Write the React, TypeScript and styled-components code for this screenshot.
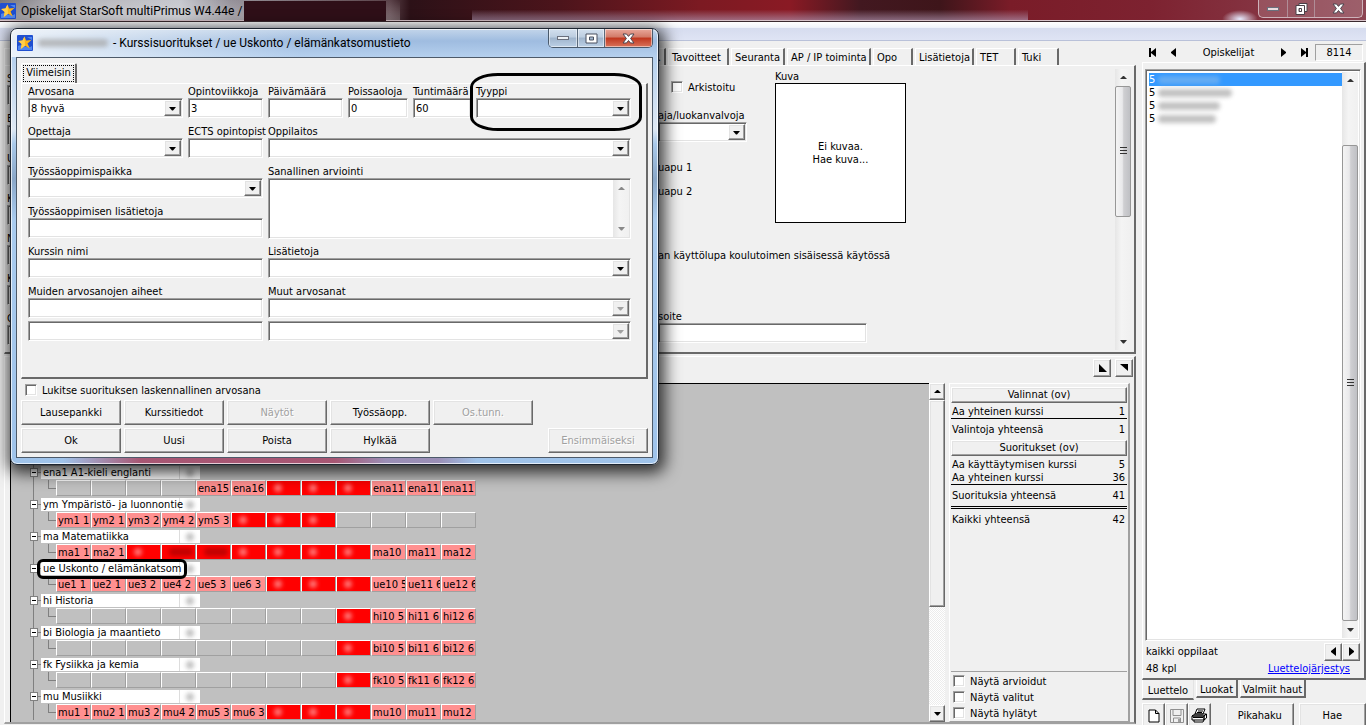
import React from 'react';
import styled, { createGlobalStyle, css } from 'styled-components';

const face = '#f0f0f0';

const GlobalStyle = createGlobalStyle`
  * { box-sizing: border-box; }
  body {
    margin: 0;
    background: ${face};
    color: #000;
    font: 11px/13px "DejaVu Sans Condensed", "Liberation Sans", sans-serif;
  }
  button, input, select, textarea { font: inherit; color: inherit; margin: 0; padding: 0; border-radius: 0; }
  p { margin: 0; }
`;

const raised = css`
  border: 1px solid;
  border-color: #fff #696969 #696969 #fff;
  box-shadow: inset -1px -1px #a0a0a0, inset 1px 1px #e3e3e3;
  background: ${face};
`;

const sunken = css`
  border: 1px solid;
  border-color: #a0a0a0 #fff #fff #a0a0a0;
  box-shadow: inset 1px 1px #696969, inset -1px -1px #e3e3e3;
  background: #fff;
`;

/* ---------- shared controls ---------- */

const Glyph = styled.svg`
  display: block;
  flex: none;
  fill: currentColor;
`;

type Dir = 'up' | 'down' | 'left' | 'right';
const arrowPaths: Record<Dir, string> = {
  up: 'M0 5h7L4 2H3z',
  down: 'M0 2h7L4 5.500H3z',
  left: 'M6 0v9L1 5V4z',
  right: 'M1 0v9L6 5V4z',
};
const Arrow = ({ dir }: { dir: Dir }) =>
  dir === 'left' || dir === 'right' ? (
    <Glyph width="7" height="9" viewBox="0 0 7 9"><path d={arrowPaths[dir]} /></Glyph>
  ) : (
    <Glyph width="7" height="7" viewBox="0 0 7 7"><path d={arrowPaths[dir]} /></Glyph>
  );

const TextInput = styled.input`
  ${sunken}
  display: block;
  width: 100%;
  height: 20px;
  padding: 0 2px;
`;

const ComboBox = styled.span`
  ${sunken}
  display: grid;
  height: 20px;
`;
const ComboSelect = styled.select`
  grid-area: 1 / 1;
  min-width: 0;
  appearance: none;
  border: 0;
  background: transparent;
  padding: 0 20px 0 2px;
  opacity: 1;
`;
const ComboArrow = styled.span<{ $off?: boolean }>`
  ${raised}
  grid-area: 1 / 1;
  justify-self: end;
  display: flex;
  align-items: center;
  justify-content: center;
  width: 17px;
  margin: 1px;
  pointer-events: none;
  color: ${(p) => (p.$off ? '#a0a0a0' : '#000')};
`;
const Combo = ({ id, value = '', off }: { id: string; value?: string; off?: boolean }) => (
  <ComboBox>
    <ComboSelect id={id} disabled={off} defaultValue={value} aria-label={id}>
      <option>{value}</option>
    </ComboSelect>
    <ComboArrow $off={off}><Arrow dir="down" /></ComboArrow>
  </ComboBox>
);

const CheckLabel = styled.label`
  display: flex;
  align-items: center;
  gap: 5px;
  height: 16px;
`;
const CheckBox = styled.input.attrs({ type: 'checkbox' })`
  ${sunken}
  appearance: none;
  flex: none;
  width: 12px;
  height: 12px;
`;
const Check = ({ children }: { children: React.ReactNode }) => (
  <CheckLabel><CheckBox />{children}</CheckLabel>
);

const PushButton = styled.button`
  ${raised}
  height: 25px;
  white-space: nowrap;
  &:disabled { color: #a0a0a0; text-shadow: 1px 1px #fff; }
`;

const SmallButton = styled(PushButton)`
  display: flex;
  align-items: center;
  justify-content: center;
  flex: none;
  width: 18px;
  height: 18px;
`;

const Smudge = styled.span<{ $w: number; $tone?: string }>`
  display: block;
  width: ${(p) => p.$w}px;
  height: 8px;
  border-radius: 4px;
  background: ${(p) => p.$tone ?? '#a8a8a8'};
  opacity: 0.7;
  filter: blur(2px);
`;

/* ---------- scroll bars ---------- */

const Scroll = styled.div<{ $dim?: boolean }>`
  display: flex;
  flex-direction: column;
  flex: none;
  width: 16px;
  background: linear-gradient(90deg, #e6e6e6, #f4f4f4 40%, #f0f0f0);
  color: ${(p) => (p.$dim ? '#888' : '#333')};
`;
const ScrollEnd = styled.button`
  display: flex;
  align-items: center;
  justify-content: center;
  height: 17px;
  border: 0;
  background: transparent;
`;
const ScrollSpace = styled.div<{ $grow: number }>`
  flex: ${(p) => p.$grow} 1 0;
`;
const ScrollThumb = styled.div<{ $grow: number }>`
  flex: ${(p) => p.$grow} 1 0;
  display: flex;
  align-items: center;
  justify-content: center;
  border: 1px solid #979797;
  border-radius: 2px;
  background: linear-gradient(90deg, #f4f4f4, #e9e9eb 45%, #cfcfd2 55%, #bfc0c4);
`;
const Grip = () => (
  <Glyph width="7" height="8" viewBox="0 0 7 8"><path d="M0 0h7v1H0zM0 3h7v1H0zM0 6h7v1H0z" /></Glyph>
);

const ClassicScroll = styled.div`
  display: flex;
  flex-direction: column;
  flex: none;
  width: 16px;
  background: repeating-conic-gradient(#fff 0 25%, #ececec 0 50%) 0 0 / 2px 2px;
`;
const ClassicEnd = styled(PushButton)`
  display: flex;
  align-items: center;
  justify-content: center;
  height: 17px;
`;
const ClassicThumb = styled.div<{ $grow: number }>`
  ${raised}
  flex: ${(p) => p.$grow} 1 0;
`;

/* ---------- application frame ---------- */

const Shell = styled.main`
  position: relative;
  display: flex;
  flex-direction: column;
  height: 100vh;
  overflow: hidden;
  background: ${face};
`;

const AppTitle = styled.header`
  display: flex;
  flex: none;
  height: 22px;
  border-bottom: 1px solid #3b2a30;
  box-shadow: inset 0 -1px #d8c4cb;
  background:
    linear-gradient(180deg, transparent 45%, rgba(176, 150, 178, 0.7)) 472px 0 / 556px 100% no-repeat,
    radial-gradient(ellipse at center, #e8ecff, transparent 70%) 1222px 10px / 36px 18px no-repeat,
    linear-gradient(180deg, transparent, rgba(255, 255, 255, 0.25)) 0 0 / 400px 100% no-repeat,
    linear-gradient(90deg, #77757a, #b2b0b5 60px, #c6c8ce 180px, #96929a 230px, #5a4148 390px, #2c1117 410px,
      #4c141b 560px, #7c1a22 700px, #8a1a24 790px, #421820 860px, #3e151a 940px, #7a1c28 1010px, #7d2230 1150px, #8c4452 1366px);
`;
const AppTitleText = styled.h1`
  display: flex;
  align-items: center;
  gap: 5px;
  flex: 1;
  margin: 0;
  font: 12px/20px Roboto, "Liberation Sans", sans-serif;
  white-space: nowrap;
`;
const Redacted = styled.span`
  align-self: stretch;
  width: 142px;
  margin: 1px 0 0 -3px;
  background: #2f0f18;
`;
const FrameButtons = styled.div`
  display: flex;
  height: 18px;
  margin-right: 3px;
  border: 1px solid #cdb2ba;
  border-top: 0;
  border-radius: 0 0 5px 5px;
`;
const FrameButton = styled.button<{ $w: number }>`
  display: flex;
  align-items: center;
  justify-content: center;
  width: ${(p) => p.$w}px;
  border: 0;
  border-right: 1px solid #b08d97;
  background: rgba(255, 255, 255, 0.15);
  &:last-child { border-right: 0; }
`;
const MenuStrip = styled.div`
  flex: none;
  height: 19px;
  border-bottom: 1px solid #b9c1d9;
  background: linear-gradient(180deg, #fff, #f1f4fb 30%, #d6dcef 36%, #dfe4f4);
`;

const Body = styled.div`
  display: flex;
  flex: 1;
  min-height: 0;
`;
const LeftPane = styled.section`
  display: flex;
  flex-direction: column;
  flex: 1;
  min-width: 0;
  padding: 7px 6px 1px 4px;
`;

/* ---------- student card ---------- */

const TabRow = styled.div`
  display: flex;
  gap: 2px;
`;
const CardTab = styled.button<{ $w: number; $end?: boolean }>`
  flex: none;
  width: ${(p) => p.$w}px;
  height: 17px;
  padding: 0 3px;
  border: 0;
  border-top: 1px solid #fff;
  border-left: 1px solid #fff;
  border-right: 2px solid #696969;
  background: transparent;
  text-align: ${(p) => (p.$end ? 'right' : 'left')};
  white-space: nowrap;
`;
const Card = styled.div`
  display: flex;
  flex: none;
  height: 289px;
  padding: 3px 3px 2px 0;
  border: 1px solid #fff;
  border-right: 2px solid #696969;
  border-bottom: 2px solid #696969;
`;
const SideFields = styled.div`
  display: flex;
  flex-direction: column;
  flex: none;
  gap: 7px;
  width: 653px;
  padding: 3px 0 0 2px;
`;
const SideField = styled.label`
  display: block;
`;
const CardMain = styled.div`
  flex: 1;
  min-width: 0;
  padding-top: 1px;
`;
const CardTop = styled.div`
  display: flex;
  gap: 28px;
  height: 153px;
`;
const CardColumn = styled.div`
  width: 89px;
  padding-top: 9px;
`;
const CardCheck = styled.div`
  padding-left: 13px;
`;
const CardLabel = styled.label`
  display: block;
  padding-top: 14px;
  white-space: nowrap;
`;
const CardLine = styled.p`
  padding-top: 11px;
  white-space: nowrap;
`;
const HelperLines = styled.div`
  padding-top: 8px;
`;
const CardNote = styled.p`
  padding: 26px 0 48px;
  white-space: nowrap;
`;
const Address = styled.label`
  display: block;
  width: 209px;
`;
const PhotoTitle = styled.p`
  line-height: 13px;
  height: 13px;
`;
const Photo = styled.button`
  display: block;
  width: 131px;
  height: 140px;
  border: 1px solid #000;
  background: #fff;
`;

/* ---------- course work area ---------- */

const Work = styled.div`
  display: flex;
  flex-direction: column;
  flex: 1;
  min-height: 0;
  margin-top: 2px;
  border: 1px solid #fff;
  border-right: 2px solid #696969;
  border-bottom: 2px solid #a0a0a0;
`;
const WorkTools = styled.div`
  display: flex;
  justify-content: flex-end;
  gap: 4px;
  flex: none;
  height: 26px;
  padding: 2px 1px;
`;
const WorkBody = styled.div`
  display: flex;
  flex: 1;
  min-height: 0;
  padding: 0 4px 0 5px;
`;
const Tree = styled.div`
  isolation: isolate;
  flex: 1;
  min-width: 0;
  overflow: hidden;
  padding: 80px 0 0 19px;
  border-top: 1px solid #000;
  border-left: 1px solid #000;
  background: #c0c0c0;
`;
const Subject = styled.div`
  height: 32px;
  padding-top: 2px;
  background: linear-gradient(#808080, #808080) 3px 0 / 1px 100% no-repeat;
`;
const SubjectHead = styled.div`
  display: flex;
  align-items: center;
  height: 13px;
  margin-bottom: 1px;
`;
const Toggle = styled.button`
  display: flex;
  align-items: center;
  justify-content: center;
  width: 8px;
  height: 9px;
  border: 1px solid #808080;
  background: #fff;
`;
const Stem = styled.span`
  width: 3px;
  height: 1px;
  background: #808080;
`;
const SubjectName = styled.span`
  position: relative;
  z-index: 1;
  width: 138px;
  height: 13px;
  padding-left: 2px;
  background: #fff;
  white-space: nowrap;
`;
const Grade = styled.span`
  display: flex;
  align-items: center;
  width: 21px;
  height: 13px;
  padding-left: 6px;
  border-left: 1px solid #ddd;
  background: #fff;
`;
const Cells = styled.div`
  display: flex;
  padding-left: 18px;
`;
const Elbow = styled.span`
  width: 8px;
  height: 9px;
  border-left: 1px solid #808080;
  border-bottom: 1px solid #808080;
`;
const Cell = styled.span<{ $kind: 'empty' | 'pink' | 'red' }>`
  display: flex;
  align-items: center;
  width: 35px;
  height: 16px;
  padding-left: ${(p) => (p.$kind === 'red' ? 7 : 1)}px;
  overflow: hidden;
  white-space: nowrap;
  border: 1px solid;
  border-color: #fff #a0a0a0 #a0a0a0 #fff;
  background: ${(p) => ({ empty: '#c0c0c0', pink: '#ff9090', red: '#ff0000' })[p.$kind]};
`;

const Summary = styled.aside`
  display: flex;
  flex-direction: column;
  flex: none;
  width: 181px;
  margin-left: 4px;
  padding: 3px 1px 0;
  border: 1px solid #fff;
  border-right: 2px solid #a0a0a0;
  border-bottom: 1px solid #a0a0a0;
`;
const SummaryTable = styled.table`
  width: 100%;
  border-collapse: collapse;
  td { padding: 0 2px 0 1px; }
  td + td { text-align: right; }
`;
const SummaryHead = styled.caption`
  ${raised}
  height: 16px;
  margin: 0 0 2px;
`;
const SumRow = styled.tr<{ $line?: 'one' | 'two' }>`
  td {
    padding-top: ${(p) => (p.$line ? 4 : 0)}px;
    padding-bottom: ${(p) => (p.$line ? 4 : 0)}px;
    border-top: ${(p) => (p.$line === 'two' ? '3px double #000' : p.$line ? '1px solid #000' : '0')};
  }
`;
const Filters = styled.div`
  margin-top: auto;
  padding: 1px 0 0 2px;
  border-top: 1px solid #a0a0a0;
`;

/* ---------- student list ---------- */

const RightPane = styled.section`
  display: flex;
  flex-direction: column;
  flex: none;
  width: 224px;
  padding-top: 3px;
`;
const Navigator = styled.div`
  display: flex;
  align-items: center;
  height: 17px;
`;
const NavButton = styled.button`
  display: flex;
  align-items: center;
  justify-content: center;
  width: 21px;
  height: 17px;
  border: 0;
  background: transparent;
`;
const NavTitle = styled.span`
  flex: 1;
  text-align: center;
`;
const Counter = styled.span`
  width: 48px;
  height: 17px;
  margin-right: 3px;
  border: 1px solid;
  border-color: #a0a0a0 #fff #fff #a0a0a0;
  line-height: 16px;
  text-align: center;
`;
const ListPanel = styled.div`
  display: flex;
  flex-direction: column;
  flex: 1;
  min-height: 0;
  margin-top: 1px;
  padding: 6px 3px 1px 2px;
  border: 1px solid #fff;
  border-right: 2px solid #696969;
  border-bottom: 2px solid #696969;
`;
const ListBox = styled.div`
  ${sunken}
  display: flex;
  flex: 1;
  min-height: 0;
  margin-bottom: 2px;
  padding: 2px;
`;
const Students = styled.ul`
  flex: 1;
  margin: 0;
  padding: 1px 0 0 1px;
  list-style: none;
`;
const Student = styled.li<{ $on?: boolean }>`
  display: flex;
  align-items: center;
  gap: 3px;
  height: 13px;
  color: ${(p) => (p.$on ? '#fff' : '#000')};
  background: ${(p) => (p.$on ? '#3399ff' : 'transparent')};
`;
const ListInfo = styled.div`
  display: flex;
  align-items: center;
  height: 17px;
  padding: 0 1px 0 1px;
`;
const Spacer = styled.span`
  flex: 1;
`;
const OrderLink = styled.a`
  margin-right: 10px;
  color: #0000ff;
`;
const BottomTabs = styled.div`
  display: flex;
  align-items: flex-start;
  gap: 2px;
  height: 23px;
`;
const BottomTab = styled.button<{ $w: number; $on?: boolean }>`
  width: ${(p) => p.$w}px;
  height: ${(p) => (p.$on ? 20 : 18)}px;
  border: 1px solid #fff;
  border-top: 0;
  border-right: ${(p) => (p.$on ? 1 : 2)}px solid ${(p) => (p.$on ? '#e3e3e3' : '#696969')};
  border-bottom: 2px solid #696969;
  background: transparent;
  padding: 3px 0 0;
  white-space: nowrap;
`;
const ListTools = styled.div`
  display: flex;
  height: 22px;
`;
const ToolButton = styled(PushButton)`
  display: flex;
  align-items: center;
  justify-content: center;
  width: 23px;
`;
const WideButton = styled(PushButton)`
  flex: 1;
  margin-left: 5px;
`;
const ToolGap = styled.span`
  width: 10px;
`;

/* ---------- course result window ---------- */

const Dialog = styled.div`
  position: absolute;
  left: 10px;
  top: 28px;
  width: 649px;
  display: flex;
  flex-direction: column;
  padding: 0 5px 6px;
  border: 1px solid #1d2530;
  border-radius: 7px;
  background:
    linear-gradient(90deg, transparent 8%, rgba(170, 50, 75, 0.75) 20% 50%, rgba(150, 90, 130, 0.5) 58% 66%, transparent 72%)
      0 100% / 100% 6px no-repeat,
    linear-gradient(90deg, rgba(255, 255, 255, 0.75), transparent 45%) 0 0 / 100% 28px no-repeat,
    linear-gradient(180deg, #c3d5ea, #9fbce0 12px, #b5d0ee 28px, #dfe9f4 100px, #a9c9ea 115px, #8aa7c8 150px, #a9cbee 190px, #9fc3ea);
  box-shadow: inset 0 0 0 1px rgba(255, 255, 255, 0.7), 2px 4px 16px 4px rgba(0, 0, 0, 0.75);
`;
const DialogTitle = styled.div`
  display: flex;
  align-items: center;
  gap: 5px;
  height: 28px;
  padding-left: 1px;
  font: 12px/20px Roboto, "Liberation Sans", sans-serif;
  white-space: nowrap;
`;
const DialogName = styled.h2`
  flex: 1;
  margin: 0;
  font: inherit;
`;
const DialogButtons = styled.div`
  display: flex;
  align-self: flex-start;
  height: 19px;
  border: 1px solid #4a5a6c;
  border-top: 0;
  border-radius: 0 0 5px 5px;
  overflow: hidden;
`;
const DialogButton = styled.button<{ $w: number; $red?: boolean }>`
  display: flex;
  align-items: center;
  justify-content: center;
  width: ${(p) => p.$w}px;
  border: 0;
  border-right: 1px solid #5a6a7c;
  box-shadow: inset 0 0 0 1px rgba(255, 255, 255, 0.5);
  background: ${(p) =>
    p.$red
      ? 'linear-gradient(180deg, #e9a99c, #d27a68 45%, #c0361e 50%, #d9735a)'
      : 'linear-gradient(180deg, #d3e0ee, #bccde0 45%, #9fb4cc 50%, #bcd0e6)'};
  &:last-child { border-right: 0; }
`;
const DialogBody = styled.div`
  padding: 5px 4px 4px;
  border: 1px solid #4d5a69;
  background: ${face};
`;
const DialogTab = styled.button`
  display: block;
  height: 20px;
  width: 56px;
  padding: 1px;
  border: 1px solid #fff;
  border-right: 2px solid #696969;
  border-bottom: 0;
  border-radius: 2px 2px 0 0;
  background: ${face};
`;
const TabFocus = styled.span`
  display: block;
  height: 17px;
  border: 1px dotted #000;
  line-height: 14px;
`;
const Sheet = styled.div`
  display: grid;
  grid-template-columns: 235px 1fr;
  grid-auto-rows: 33px;
  gap: 7px 5px;
  height: 296px;
  padding: 1px 15px 0 6px;
  border: 1px solid #fff;
  border-right: 2px solid #696969;
  border-bottom: 2px solid #696969;
`;
const Line = styled.div<{ $cols?: string; $full?: boolean }>`
  display: grid;
  grid-template-columns: ${(p) => p.$cols ?? '1fr'};
  gap: 5px;
  grid-column: ${(p) => (p.$full ? '1 / -1' : 'auto')};
`;
const FieldBox = styled.div<{ $tall?: boolean }>`
  min-width: 0;
  grid-row: ${(p) => (p.$tall ? 'span 2' : 'auto')};
`;
const FieldLabel = styled.label`
  display: block;
  height: 13px;
  white-space: nowrap;
`;
const Pair = styled.div`
  display: flex;
  flex-direction: column;
  gap: 3px;
`;
const Notes = styled.div`
  ${sunken}
  display: flex;
  height: 61px;
  padding: 1px;
`;
const NotesText = styled.textarea`
  flex: 1;
  border: 0;
  resize: none;
  background: transparent;
`;
const LockRow = styled.div`
  padding: 3px 0 2px 4px;
`;
const Actions = styled.div`
  display: grid;
  grid-template-columns: repeat(5, 100px) 1fr 100px;
  gap: 3px;
`;
const LastAction = styled(PushButton)`
  grid-column: 7;
`;

/* Hand-drawn marks over the form and the tree. */
const Mark = styled.div<{ $x: number; $y: number; $w: number; $h: number; $r: string }>`
  position: absolute;
  z-index: 2;
  left: ${(p) => p.$x}px;
  top: ${(p) => p.$y}px;
  width: ${(p) => p.$w}px;
  height: ${(p) => p.$h}px;
  border: 3px solid #000;
  border-radius: ${(p) => p.$r};
  pointer-events: none;
`;

const AppIcon = () => (
  <Glyph width="16" height="16" viewBox="0 0 16 16">
    <rect width="16" height="16" rx="1" fill="#1f4fd0" />
    <path d="M1 11c4-3 9 4 14 0v4H1zM10 2h5v3z" fill="#4f86ee" />
    <path d="M7.500 1.500l1.600 4 5.400-.5-4 3.500 2.300 5-4.800-2.700L3.700 14l1-5L1.200 6l4.300-.4z" fill="#ffb516" />
    <path d="M7.500 1.500l.5 9.300L3.700 14l1-5L1.200 6l4.300-.4z" fill="#ffcf4a" />
  </Glyph>
);
const MinIcon = () => (
  <Glyph width="14" height="6" viewBox="0 0 14 6">
    <rect x="1.500" y="1.500" width="11" height="3" fill="#fff" fillOpacity="0.8" stroke="#6a6f7c" />
  </Glyph>
);
const MaxIcon = () => (
  <Glyph width="13" height="11" viewBox="0 0 13 11">
    <path d="M1 1h11v9H1zM4.500 4v3h4V4z" fillRule="evenodd" fill="#fff" stroke="#4a5160" />
  </Glyph>
);
const RestoreIcon = () => (
  <Glyph width="13" height="12" viewBox="0 0 13 12">
    <path d="M4 .5h8v8H4z" fill="#fff" stroke="#4a4048" />
    <path d="M1 2.500h8.500v9H1zM4 5.500v3h2.500v-3z" fillRule="evenodd" fill="#fff" stroke="#4a4048" />
  </Glyph>
);
const CloseIcon = () => (
  <Glyph width="13" height="11" viewBox="0 0 13 11">
    <path d="M1 1h3.500l2 2.400L8.500 1H12L8.600 5.500 12 10H8.500l-2-2.500-2 2.500H1l3.400-4.500z" fill="#fff" stroke="#4c4650" />
  </Glyph>
);

const cardTabs: [string, number][] = [
  ['Tavoitteet', 61], ['Seuranta', 54], ['AP / IP toiminta', 84], ['Opo', 40],
  ['Lisätietoja', 59], ['TET', 40], ['Tuki', 41],
];

/* '' is a free slot; '*' a graded course whose mark is hidden, '#' one with a longer hidden text. */
const subjects: [string, string[]][] = [
  ['ena1 A1-kieli englanti', ['', '', '', '', 'ena15', 'ena16', '*', '*', '*', 'ena11', 'ena11', 'ena11']],
  ['ym Ympäristö- ja luonnontie', ['ym1 1', 'ym2 1', 'ym3 2', 'ym4 2', 'ym5 3', '*', '*', '*', '', '', '', '']],
  ['ma Matematiikka', ['ma1 1', 'ma2 1', '*', '#', '#', '*', '*', '*', '*', 'ma10', 'ma11', 'ma12']],
  ['ue Uskonto / elämänkatsom', ['ue1 1', 'ue2 1', 'ue3 2', 'ue4 2', 'ue5 3', 'ue6 3', '*', '*', '*', 'ue10 5', 'ue11 6', 'ue12 6']],
  ['hi Historia', ['', '', '', '', '', '', '', '', '*', 'hi10 5', 'hi11 6', 'hi12 6']],
  ['bi Biologia ja maantieto', ['', '', '', '', '', '', '', '', '*', 'bi10 5', 'bi11 6', 'bi12 6']],
  ['fk Fysiikka ja kemia', ['', '', '', '', '', '', '', '', '*', 'fk10 5', 'fk11 6', 'fk12 6']],
  ['mu Musiikki', ['mu1 1', 'mu2 1', 'mu3 2', 'mu4 2', 'mu5 3', 'mu6 3', '*', '*', '*', 'mu10', 'mu11', 'mu12']],
];

const CourseCell = ({ code }: { code: string }) => {
  if (code === '*') return <Cell $kind="red"><Smudge $w={8} $tone="#ffa0a0" /></Cell>;
  if (code === '#') return <Cell $kind="red"><Smudge $w={24} $tone="#a80000" /></Cell>;
  return <Cell $kind={code ? 'pink' : 'empty'}>{code}</Cell>;
};

const Field = ({ id, label, value = '' }: { id: string; label: string; value?: string }) => (
  <FieldBox>
    <FieldLabel htmlFor={id}>{label}</FieldLabel>
    <TextInput id={id} defaultValue={value} />
  </FieldBox>
);
const ComboField = ({ id, label, value }: { id: string; label: string; value?: string }) => (
  <FieldBox>
    <FieldLabel htmlFor={id}>{label}</FieldLabel>
    <Combo id={id} value={value} />
  </FieldBox>
);

const ResultWindow = () => (
  <Dialog role="dialog" aria-label="Kurssisuoritukset">
    <DialogTitle>
      <AppIcon />
      <Smudge $w={70} />
      <DialogName>- Kurssisuoritukset / ue Uskonto / elämänkatsomustieto</DialogName>
      <DialogButtons>
        <DialogButton $w={29} aria-label="Pienennä"><MinIcon /></DialogButton>
        <DialogButton $w={27} aria-label="Suurenna"><MaxIcon /></DialogButton>
        <DialogButton $w={47} $red aria-label="Sulje"><CloseIcon /></DialogButton>
      </DialogButtons>
    </DialogTitle>
    <DialogBody>
      <DialogTab><TabFocus>Viimeisin</TabFocus></DialogTab>
      <Sheet>
        <Line $full $cols="155px 75px 75px 60px 58px 155px">
          <ComboField id="arvosana" label="Arvosana" value="8 hyvä" />
          <Field id="opintoviikkoja" label="Opintoviikkoja" value="3" />
          <Field id="paivamaara" label="Päivämäärä" />
          <Field id="poissaoloja" label="Poissaoloja" value="0" />
          <Field id="tuntimaara" label="Tuntimäärä" value="60" />
          <ComboField id="tyyppi" label="Tyyppi" />
        </Line>
        <Line $full $cols="155px 75px 1fr">
          <ComboField id="opettaja" label="Opettaja" />
          <Field id="ects" label="ECTS opintopist" />
          <ComboField id="oppilaitos" label="Oppilaitos" />
        </Line>
        <ComboField id="paikka" label="Työssäoppimispaikka" />
        <FieldBox $tall>
          <FieldLabel htmlFor="arviointi">Sanallinen arviointi</FieldLabel>
          <Notes>
            <NotesText id="arviointi" />
            <Scroll $dim>
              <ScrollEnd aria-label="Ylös"><Arrow dir="up" /></ScrollEnd>
              <ScrollSpace $grow={1} />
              <ScrollEnd aria-label="Alas"><Arrow dir="down" /></ScrollEnd>
            </Scroll>
          </Notes>
        </FieldBox>
        <Field id="lisat" label="Työssäoppimisen lisätietoja" />
        <Field id="kurssi" label="Kurssin nimi" />
        <ComboField id="lisatietoja" label="Lisätietoja" />
        <FieldBox>
          <FieldLabel htmlFor="aihe1">Muiden arvosanojen aiheet</FieldLabel>
          <Pair>
            <TextInput id="aihe1" />
            <TextInput aria-label="Aihe 2" />
          </Pair>
        </FieldBox>
        <FieldBox>
          <FieldLabel htmlFor="muu1">Muut arvosanat</FieldLabel>
          <Pair>
            <Combo id="muu1" off />
            <Combo id="muu2" off />
          </Pair>
        </FieldBox>
      </Sheet>
      <LockRow><Check>Lukitse suorituksen laskennallinen arvosana</Check></LockRow>
      <Actions>
        <PushButton>Lausepankki</PushButton>
        <PushButton>Kurssitiedot</PushButton>
        <PushButton disabled>Näytöt</PushButton>
        <PushButton>Työssäopp.</PushButton>
        <PushButton disabled>Os.tunn.</PushButton>
        <Spacer />
        <Spacer />
        <PushButton>Ok</PushButton>
        <PushButton>Uusi</PushButton>
        <PushButton>Poista</PushButton>
        <PushButton>Hylkää</PushButton>
        <LastAction disabled>Ensimmäiseksi</LastAction>
      </Actions>
    </DialogBody>
  </Dialog>
);

const StudentCard = () => (
  <>
    <TabRow>
      <CardTab $w={662} $end>.</CardTab>
      {cardTabs.map(([name, w]) => <CardTab key={name} $w={w}>{name}</CardTab>)}
    </TabRow>
    <Card>
      <SideFields>
        {['S', 'E', 'U', 'K', 'N', 'K', 'O'].map((t, i) => (
          <SideField key={i}>{t}<TextInput /></SideField>
        ))}
      </SideFields>
      <CardMain>
        <CardTop>
          <CardColumn>
            <CardCheck><Check>Arkistoitu</Check></CardCheck>
            <CardLabel htmlFor="ohjaaja">aja/luokanvalvoja</CardLabel>
            <Combo id="ohjaaja" />
            <HelperLines>
              <CardLine>uapu 1</CardLine>
              <CardLine>uapu 2</CardLine>
            </HelperLines>
          </CardColumn>
          <div>
            <PhotoTitle>Kuva</PhotoTitle>
            <Photo>Ei kuvaa.<br />Hae kuva...</Photo>
          </div>
        </CardTop>
        <CardNote>an käyttölupa koulutoimen sisäisessä käytössä</CardNote>
        <Address>soite<TextInput /></Address>
      </CardMain>
      <Scroll>
        <ScrollEnd aria-label="Ylös"><Arrow dir="up" /></ScrollEnd>
        <ScrollThumb $grow={130}><Grip /></ScrollThumb>
        <ScrollSpace $grow={117} />
        <ScrollEnd aria-label="Alas"><Arrow dir="down" /></ScrollEnd>
      </Scroll>
    </Card>
  </>
);

const CourseTree = () => (
  <Tree>
    {subjects.map(([name, cells]) => (
      <Subject key={name}>
        <SubjectHead>
          <Toggle aria-label={name}>
            <Glyph width="4" height="1" viewBox="0 0 4 1"><rect width="4" height="1" /></Glyph>
          </Toggle>
          <Stem />
          <SubjectName>{name}</SubjectName>
          <Grade><Smudge $w={8} /></Grade>
        </SubjectHead>
        <Cells>
          <Elbow />
          {cells.map((code, i) => <CourseCell key={i} code={code} />)}
        </Cells>
      </Subject>
    ))}
  </Tree>
);

const CourseSummary = () => (
  <Summary>
    <SummaryTable>
      <SummaryHead>Valinnat (ov)</SummaryHead>
      <tbody>
        <SumRow><td>Aa yhteinen kurssi</td><td>1</td></SumRow>
        <SumRow $line="one"><td>Valintoja yhteensä</td><td>1</td></SumRow>
      </tbody>
    </SummaryTable>
    <SummaryTable>
      <SummaryHead>Suoritukset (ov)</SummaryHead>
      <tbody>
        <SumRow><td>Aa käyttäytymisen kurssi</td><td>5</td></SumRow>
        <SumRow><td>Aa yhteinen kurssi</td><td>36</td></SumRow>
        <SumRow $line="one"><td>Suorituksia yhteensä</td><td>41</td></SumRow>
        <SumRow $line="two"><td>Kaikki yhteensä</td><td>42</td></SumRow>
      </tbody>
    </SummaryTable>
    <Filters>
      <Check>Näytä arvioidut</Check>
      <Check>Näytä valitut</Check>
      <Check>Näytä hylätyt</Check>
    </Filters>
  </Summary>
);

const StudentList = () => (
  <RightPane>
    <Navigator>
      <NavButton aria-label="Ensimmäinen">
        <Glyph width="9" height="9" viewBox="0 0 9 9"><path d="M1 0h2v9H1zM8 0v9L3 5V4z" /></Glyph>
      </NavButton>
      <NavButton aria-label="Edellinen"><Arrow dir="left" /></NavButton>
      <NavTitle>Opiskelijat</NavTitle>
      <NavButton aria-label="Seuraava"><Arrow dir="right" /></NavButton>
      <NavButton aria-label="Viimeinen">
        <Glyph width="9" height="9" viewBox="0 0 9 9"><path d="M6 0h2v9H6zM1 0v9l5-4V4z" /></Glyph>
      </NavButton>
      <Counter>8114</Counter>
    </Navigator>
    <ListPanel>
      <ListBox>
        <Students>
          <Student $on>5<Smudge $w={62} $tone="#7ab4ee" /></Student>
          <Student>5<Smudge $w={74} /></Student>
          <Student>5<Smudge $w={62} /></Student>
          <Student>5<Smudge $w={58} /></Student>
        </Students>
        <Scroll>
          <ScrollEnd aria-label="Ylös"><Arrow dir="up" /></ScrollEnd>
          <ScrollSpace $grow={57} />
          <ScrollThumb $grow={478}><Grip /></ScrollThumb>
          <ScrollEnd aria-label="Alas"><Arrow dir="down" /></ScrollEnd>
        </Scroll>
      </ListBox>
      <ListInfo>
        kaikki oppilaat
        <Spacer />
        <SmallButton aria-label="Vasen"><Arrow dir="left" /></SmallButton>
        <SmallButton aria-label="Oikea"><Arrow dir="right" /></SmallButton>
      </ListInfo>
      <ListInfo>48 kpl<Spacer /><OrderLink href="#jarjestys">Luettelojärjestys</OrderLink></ListInfo>
    </ListPanel>
    <BottomTabs>
      <BottomTab $w={52} $on>Luettelo</BottomTab>
      <BottomTab $w={42}>Luokat</BottomTab>
      <BottomTab $w={66}>Valmiit haut</BottomTab>
    </BottomTabs>
    <ListTools>
      <ToolButton aria-label="Uusi">
        <Glyph width="12" height="14" viewBox="0 0 12 14">
          <path d="M1 1h6.500L11 4.500V13H1zM7.500 1v3.500H11" fill="#fff" stroke="#000" />
        </Glyph>
      </ToolButton>
      <ToolButton aria-label="Tallenna" disabled>
        <Glyph width="14" height="14" viewBox="0 0 14 14">
          <path d="M.5.5h13v13H.5zM3 .5v6h8v-6M3.500 13.500V9h7v4.500" fill="none" stroke="#909090" />
          <path d="M8 10h2v3H8z" />
        </Glyph>
      </ToolButton>
      <ToolButton aria-label="Tulosta">
        <Glyph width="17" height="15" viewBox="0 0 17 15">
          <path d="M6 1h8l-2 5H4zM1 8l3-2h11l-2 2zM1 8h12v4H1zM13 8l2.500-2v4L13 12zM3 12v2h9l1-2" fill="#fff" stroke="#000" />
          <path d="M2 9.500h10M7 3h5M6 4.500h5" stroke="#000" fill="none" />
        </Glyph>
      </ToolButton>
      <ToolGap />
      <WideButton>Pikahaku</WideButton>
      <WideButton>Hae</WideButton>
    </ListTools>
  </RightPane>
);

export default function App() {
  return (
    <Shell>
      <GlobalStyle />
      <AppTitle>
        <AppTitleText>
          <AppIcon />
          Opiskelijat StarSoft multiPrimus W4.44e /
          <Redacted />
        </AppTitleText>
        <FrameButtons>
          <FrameButton $w={29} aria-label="Pienennä"><MinIcon /></FrameButton>
          <FrameButton $w={27} aria-label="Palauta"><RestoreIcon /></FrameButton>
          <FrameButton $w={47} aria-label="Sulje"><CloseIcon /></FrameButton>
        </FrameButtons>
      </AppTitle>
      <MenuStrip />
      <Body>
        <LeftPane>
          <StudentCard />
          <Work>
            <WorkTools>
              <SmallButton aria-label="Laajenna">
                <Glyph width="9" height="8" viewBox="0 0 9 8"><path d="M1 0v8h8z" /></Glyph>
              </SmallButton>
              <SmallButton aria-label="Supista">
                <Glyph width="9" height="8" viewBox="0 0 9 8"><path d="M0 0h8v7z" /></Glyph>
              </SmallButton>
            </WorkTools>
            <WorkBody>
              <CourseTree />
              <ClassicScroll>
                <ClassicEnd aria-label="Ylös"><Arrow dir="up" /></ClassicEnd>
                <ClassicThumb $grow={204} />
                <ScrollSpace $grow={98} />
                <ClassicEnd aria-label="Alas"><Arrow dir="down" /></ClassicEnd>
              </ClassicScroll>
              <CourseSummary />
            </WorkBody>
          </Work>
        </LeftPane>
        <StudentList />
      </Body>
      <ResultWindow />
      <Mark $x={470} $y={73} $w={172} $h={58} $r="28px / 14px" />
      <Mark $x={37} $y={559} $w={150} $h={20} $r="6px" />
    </Shell>
  );
}
